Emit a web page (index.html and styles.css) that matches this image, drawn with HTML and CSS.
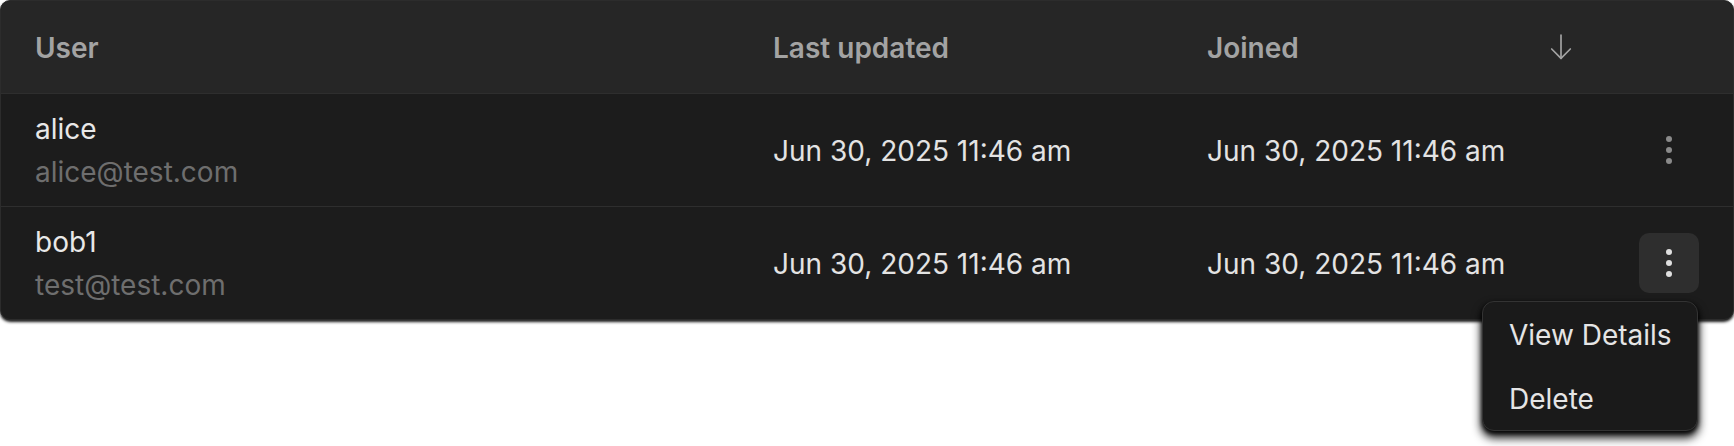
FILE: index.html
```html
<!DOCTYPE html>
<html lang="en">
<head>
<meta charset="utf-8">
<title>Users</title>
<link rel="stylesheet" href="styles.css">
</head>
<body>
<div class="table">
  <div class="row head">
    <div class="cell first">User</div>
    <div class="cell">Last updated</div>
    <div class="cell">Joined</div>
    <div class="cell sort">
      <svg width="24" height="28" viewBox="0 0 24 28" fill="none" stroke="#a3a3a3" stroke-width="1.7" stroke-linecap="round" stroke-linejoin="round"><path d="M12 2v23.3"/><path d="M2.7 16l9.3 9.3 9.3-9.3"/></svg>
    </div>
    <div class="cell"></div>
  </div>
  <div class="row body">
    <div class="cell first user">
      <div class="name">alice</div>
      <div class="email">alice@test.com</div>
    </div>
    <div class="cell date">Jun 30, 2025 11:46 am</div>
    <div class="cell date">Jun 30, 2025 11:46 am</div>
    <div class="cell"></div>
    <div class="cell actions">
      <button class="kebab">
        <svg width="12" height="34" viewBox="0 0 12 34"><circle cx="6" cy="6" r="3"/><circle cx="6" cy="17" r="3"/><circle cx="6" cy="28" r="3"/></svg>
      </button>
    </div>
  </div>
  <div class="row body last">
    <div class="cell first user">
      <div class="name">bob1</div>
      <div class="email">test@test.com</div>
    </div>
    <div class="cell date">Jun 30, 2025 11:46 am</div>
    <div class="cell date">Jun 30, 2025 11:46 am</div>
    <div class="cell"></div>
    <div class="cell actions">
      <div class="menu-wrap">
        <button class="kebab open">
          <svg width="12" height="34" viewBox="0 0 12 34"><circle cx="6" cy="6" r="3"/><circle cx="6" cy="17" r="3"/><circle cx="6" cy="28" r="3"/></svg>
        </button>
        <div class="menu">
          <div class="item">View Details</div>
          <div class="item">Delete</div>
        </div>
      </div>
    </div>
  </div>
</div>
</body>
</html>
```
FILE: styles.css
```css
* { box-sizing: border-box; }
html, body {
  margin: 0;
  background: #ffffff;
}
html { min-height: 446px; }
body {
  min-height: 446px;
  font-family: Inter, "Noto Sans", sans-serif;
  font-size: 28px;
  color: #e5e5e5;
}
.table {
  width: 1734px;
  border: 1px solid #2c2c2c;
  border-radius: 10px;
  background: #1c1c1c;
  box-shadow: 0 2px 3px rgba(0,0,0,0.9);
}
.row {
  display: grid;
  grid-template-columns: 737px 434px 1fr 64px 140px;
}
.row.head {
  height: 93px;
  background: #262626;
  border-bottom: 1px solid #2e2e2e;
  border-radius: 9px 9px 0 0;
  font-weight: 600;
  color: #a3a3a3;
}
.row.body {
  height: 113px;
  border-bottom: 1px solid #2e2e2e;
}
.row.body.last {
  border-bottom: none;
  height: 112px;
}
.cell {
  display: flex;
  align-items: center;
  padding-left: 35px;
  padding-top: 2px;
  min-width: 0;
}
.cell.first { padding-left: 34px; }
.cell.sort {
  padding-left: 0;
  padding-top: 0;
  justify-content: center;
}
.cell.user {
  flex-direction: column;
  justify-content: center;
  align-items: flex-start;
  gap: 1px;
  line-height: 42px;
  padding-top: 1px;
}
.name { color: #e8e8e8; }
.email { color: #6e6e6e; }
.date { color: #e3e3e3; }
.cell.actions {
  padding-left: 0;
  padding-top: 0;
  padding-right: 34px;
  justify-content: flex-end;
}
.kebab {
  width: 60px;
  height: 60px;
  border: none;
  border-radius: 10px;
  background: transparent;
  padding: 0;
  display: flex;
  align-items: center;
  justify-content: center;
  fill: #8a8a8a;
}
.kebab.open {
  background: #2e2e2e;
  fill: #e0e0e0;
}
.menu-wrap {
  position: relative;
}
.menu {
  position: absolute;
  right: 1px;
  top: calc(100% + 8px);
  width: 216px;
  background: #1a1a1a;
  border: 1px solid #333333;
  border-radius: 12px;
  box-shadow: 0 6px 10px 1px rgba(0,0,0,0.9), 0 2px 4px rgba(0,0,0,0.9);
  z-index: 2;
}
.item {
  height: 64px;
  display: flex;
  align-items: center;
  padding-left: 26px;
  padding-top: 2px;
  color: #e5e5e5;
  white-space: nowrap;
}
```
